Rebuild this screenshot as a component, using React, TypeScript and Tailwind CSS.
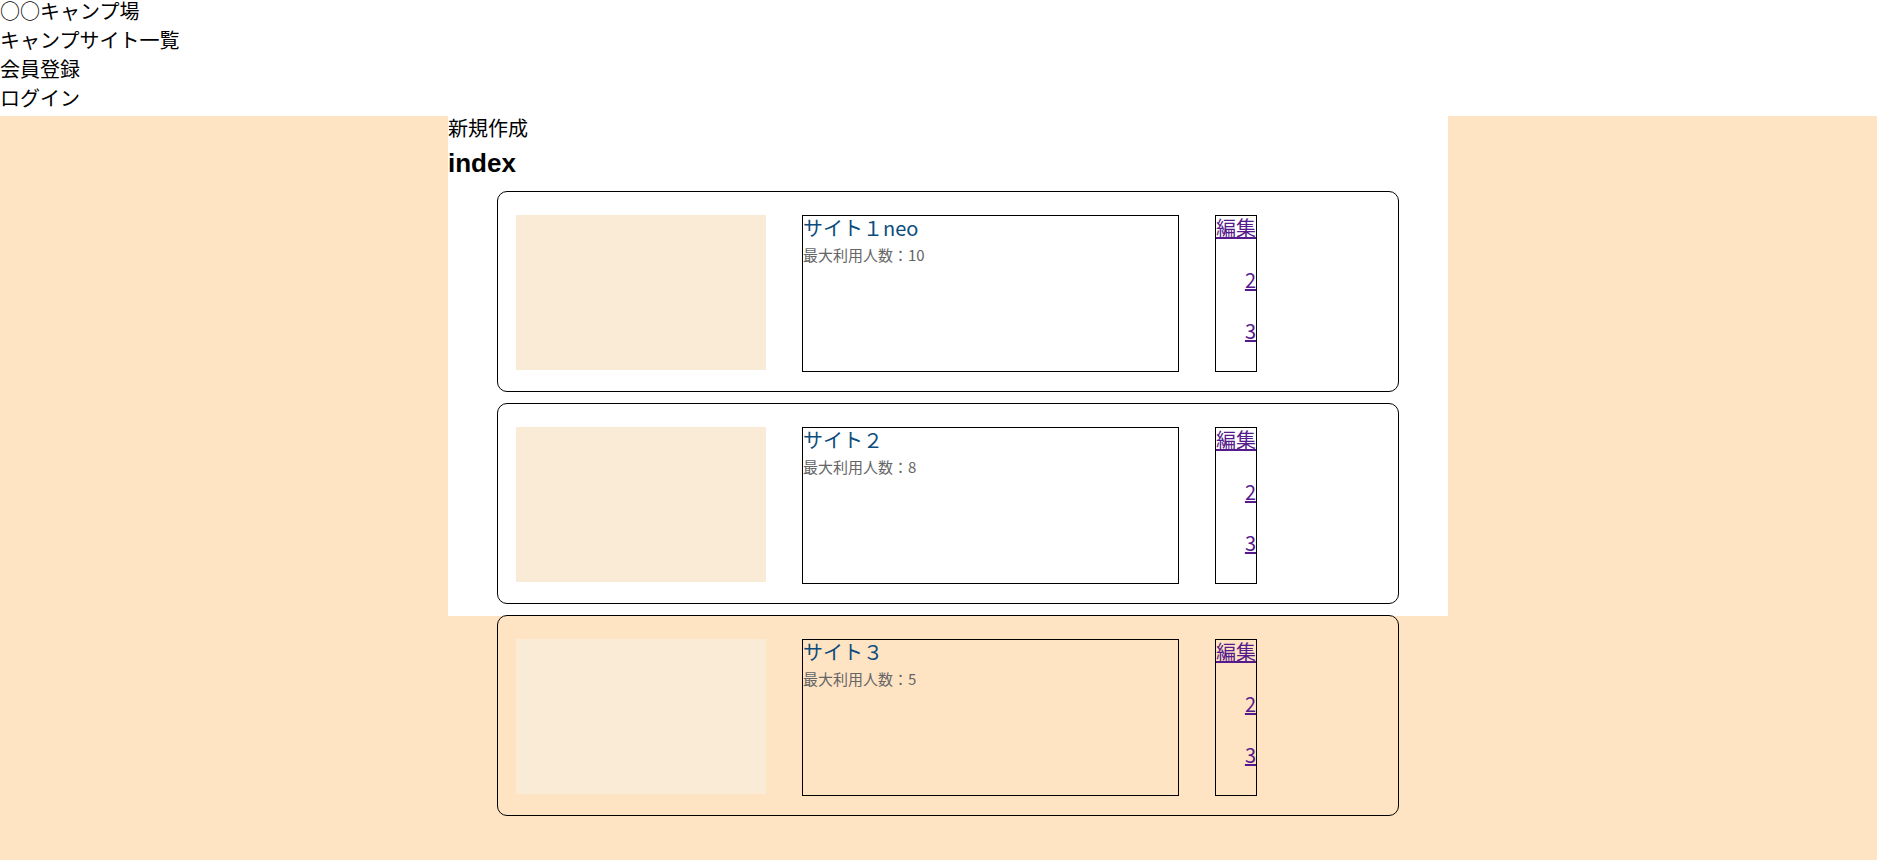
import React from 'react';

interface Site {
  id: number;
  name: string;
  capacity: number;
}

const sites: Site[] = [
  { id: 1, name: 'サイト１neo', capacity: 10 },
  { id: 2, name: 'サイト２', capacity: 8 },
  { id: 3, name: 'サイト３', capacity: 5 },
];

const jp = { fontFamily: '"Noto Sans CJK JP", "Noto Sans", sans-serif' };

function SiteCard({ site }: { site: Site }) {
  return (
    <div className="w-[902px] mx-auto mb-[11px] border border-black rounded-[10px] pl-[18px] pt-[23px] pb-[19px] flex items-start gap-[36px]">
      <div className="w-[250px] h-[155px] bg-[#faebd7] shrink-0" />
      <div className="w-[377px] h-[157px] border border-black shrink-0">
        <div className="text-[20px] leading-[24px] text-[#0d4c7c]">{site.name}</div>
        <div className="text-[15px] leading-[30px] text-[#666666]">最大利用人数：{site.capacity}</div>
      </div>
      <div className="w-[42px] h-[157px] border border-black shrink-0 flex flex-col">
        {['編集', '2', '3'].map((label) => (
          <div key={label} className="h-[52px] text-right">
            <a href="#" className="text-[20px] leading-[24px] text-[#551a8b] underline">
              {label}
            </a>
          </div>
        ))}
      </div>
    </div>
  );
}

export default function App() {
  return (
    <div className="min-h-screen flex flex-col bg-white text-black" style={jp}>
      <nav className="text-[20px]">
        <div className="h-[29px] leading-[22px]">○○キャンプ場</div>
        <div className="h-[29px] leading-[22px]">キャンプサイト一覧</div>
        <div className="h-[29px] leading-[22px]">会員登録</div>
        <div className="h-[29px] leading-[22px]">ログイン</div>
      </nav>
      <main className="flex-1 bg-[#ffe4c4]">
        <div className="w-[1000px] h-[500px] ml-[448px] bg-white">
          <div className="h-[29px] text-[20px] leading-[24px]">新規作成</div>
          <h2
            className="mt-[3px] mb-[13px] text-[26px] leading-[30px] font-bold"
            style={{ fontFamily: '"Liberation Sans", Arial, sans-serif' }}
          >
            index
          </h2>
          {sites.map((site) => (
            <SiteCard key={site.id} site={site} />
          ))}
        </div>
      </main>
    </div>
  );
}
